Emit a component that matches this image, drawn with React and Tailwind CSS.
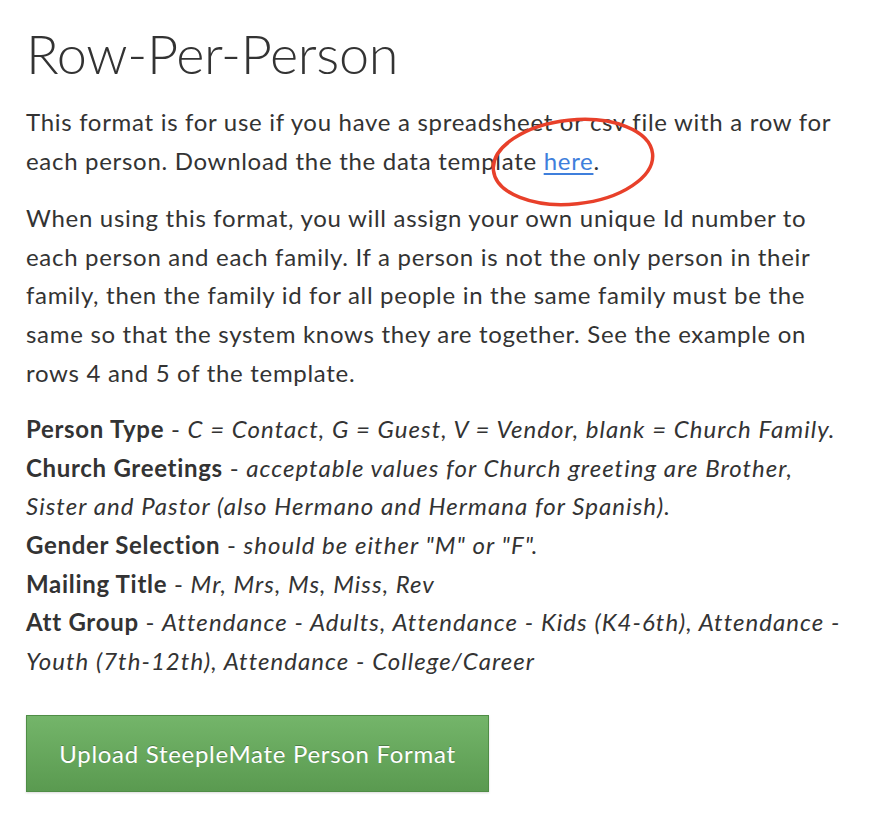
import React from "react";

const rules = [
  { label: "Person Type", text: "C = Contact, G = Guest, V = Vendor, blank = Church Family." },
  {
    label: "Church Greetings",
    text: "acceptable values for Church greeting are Brother, Sister and Pastor (also Hermano and Hermana for Spanish).",
  },
  { label: "Gender Selection", text: 'should be either "M" or "F".' },
  { label: "Mailing Title", text: "Mr, Mrs, Ms, Miss, Rev" },
  {
    label: "Att Group",
    text: "Attendance - Adults, Attendance - Kids (K4-6th), Attendance - Youth (7th-12th), Attendance - College/Career",
  },
];

export default function App() {
  return (
    <div className="min-h-screen bg-white text-[#333333] font-['Lato',sans-serif]">
      <div className="relative w-[872px] pl-[26px] pr-[30px] pt-[22px]">
        <h1 className="text-[54px] leading-[64px] font-light tracking-[-0.3px]">Row-Per-Person</h1>

        <div className="tracking-[0.7px] text-[24px] leading-[38.6px]">
          <p className="mt-[17px]">
            This format is for use if you have a spreadsheet or csv file with a row for each person. Download the the
            data template{" "}
            <a href="#" className="text-[#3f7fdc] underline underline-offset-[3px]">
              here
            </a>
            .
          </p>

          <p className="mt-[19px]">
            When using this format, you will assign your own unique Id number to each person and each family. If a
            person is not the only person in their family, then the family id for all people in the same family must
            be the same so that the system knows they are together. See the example on rows 4 and 5 of the template.
          </p>

          <div className="mt-[18px]">
            {rules.map((r) => (
              <div key={r.label}>
                <strong className="font-bold">{r.label}</strong> -{" "}
                <em className="tracking-[1.05px]">{r.text}</em>
              </div>
            ))}
          </div>

          <button className="mt-[35px] w-[463px] h-[77px] border border-[#4f8d46] bg-gradient-to-b from-[#74b56a] to-[#5a9a50] text-white [text-shadow:0_-1px_0_rgba(0,0,0,0.25)] shadow-[0_1px_2px_rgba(0,0,0,0.15)]">
            Upload SteepleMate Person Format
          </button>
        </div>

        <svg
          className="absolute left-[486px] top-[116px] pointer-events-none"
          width="176"
          height="100"
          viewBox="0 0 176 100"
        >
          <ellipse
            cx="87"
            cy="46"
            rx="80"
            ry="42"
            transform="rotate(-6 87 46)"
            fill="none"
            stroke="#e8402a"
            strokeWidth="3.5"
          />
        </svg>
      </div>
    </div>
  );
}
